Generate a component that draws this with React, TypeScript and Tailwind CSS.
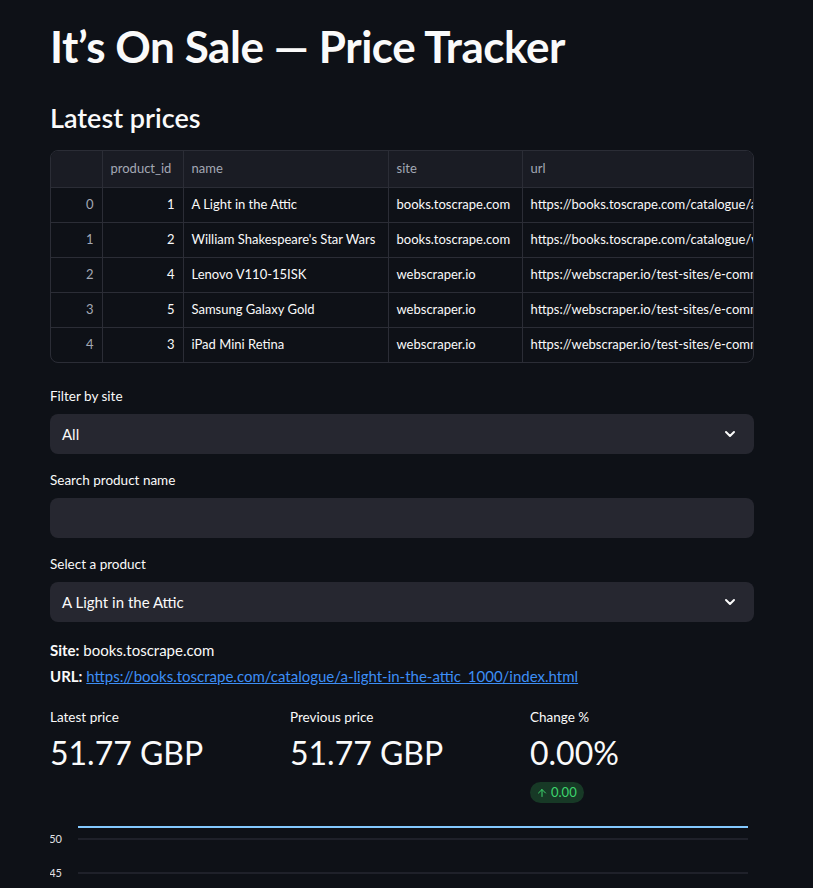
import { ChevronDown, ArrowUp } from 'lucide-react';

const rows = [
  { idx: 0, id: 1, name: 'A Light in the Attic', site: 'books.toscrape.com', url: 'https://books.toscrape.com/catalogue/a-light-in-the-attic_1000/index.html' },
  { idx: 1, id: 2, name: "William Shakespeare's Star Wars", site: 'books.toscrape.com', url: 'https://books.toscrape.com/catalogue/william-shakespeares-star-wars_1/index.html' },
  { idx: 2, id: 4, name: 'Lenovo V110-15ISK', site: 'webscraper.io', url: 'https://webscraper.io/test-sites/e-commerce/allinone/product/545' },
  { idx: 3, id: 5, name: 'Samsung Galaxy Gold', site: 'webscraper.io', url: 'https://webscraper.io/test-sites/e-commerce/allinone/product/549' },
  { idx: 4, id: 3, name: 'iPad Mini Retina', site: 'webscraper.io', url: 'https://webscraper.io/test-sites/e-commerce/allinone/product/611' },
];

const font = "font-['Source_Sans_Pro','Lato',sans-serif]";

function Label({ children }: { children: React.ReactNode }) {
  return <div className="text-[13.5px] leading-[21px] pb-[7px] text-[#fafafa]">{children}</div>;
}

function SelectBox({ value }: { value?: string }) {
  return (
    <div className="h-10 rounded-lg bg-[#262730] flex items-center justify-between pl-3 pr-4">
      <span className="text-[15px] text-[#fafafa]">{value}</span>
      {value !== undefined && <ChevronDown size={16} strokeWidth={3} className="text-[#fafafa]" />}
    </div>
  );
}

function Metric({ label, value, delta }: { label: string; value: string; delta?: string }) {
  return (
    <div className="flex flex-col">
      <div className="text-[13.5px] leading-[21px] text-[#fafafa]">{label}</div>
      <div className="text-[32px] leading-[48px] text-[#fafafa] mt-[1px]">{value}</div>
      {delta && (
        <div className="mt-[5px] self-start h-[21px] rounded-full bg-[#173926] text-[#3dd56d] text-[13px] flex items-center gap-[3px] pl-[6px] pr-[7px]">
          <ArrowUp size={12} strokeWidth={2} />
          <span>{delta}</span>
        </div>
      )}
    </div>
  );
}

export default function App() {
  return (
    <div className={`h-[888px] overflow-hidden bg-[#0e1117] text-[#fafafa] ${font}`}>
      <div className="w-[704px] ml-[50px] pt-[20px]">
        <h1 className="text-[44px] leading-[52px] font-bold tracking-[-0.01em]">It’s On Sale — Price Tracker</h1>
        <h2 className="text-[27px] leading-[36px] font-semibold mt-[28px]">Latest prices</h2>

        <div className="mt-[14px] rounded-lg border border-[#2b2d36] overflow-hidden">
          <table className="border-collapse table-fixed text-[13px]" style={{ width: 900 }}>
            <colgroup>
              <col className="w-[51px]" />
              <col className="w-[81px]" />
              <col className="w-[205px]" />
              <col className="w-[134px]" />
              <col className="w-[429px]" />
            </colgroup>
            <thead>
              <tr className="h-[36px] bg-[#1a1c24] text-[#a3a8b4]">
                <th className="border-r border-b border-[#2b2d36]"></th>
                <th className="border-r border-b border-[#2b2d36] font-normal text-left px-2">product_id</th>
                <th className="border-r border-b border-[#2b2d36] font-normal text-left px-2">name</th>
                <th className="border-r border-b border-[#2b2d36] font-normal text-left px-2">site</th>
                <th className="border-b border-[#2b2d36] font-normal text-left px-2">url</th>
              </tr>
            </thead>
            <tbody>
              {rows.map((r, i) => (
                <tr key={r.idx} className="h-[35px]">
                  <td className={`border-r border-[#2b2d36] text-right px-2 text-[#a3a8b4] ${i < 4 ? 'border-b' : ''}`}>{r.idx}</td>
                  <td className={`border-r border-[#2b2d36] text-right px-2 ${i < 4 ? 'border-b' : ''}`}>{r.id}</td>
                  <td className={`border-r border-[#2b2d36] px-2 whitespace-nowrap overflow-hidden ${i < 4 ? 'border-b' : ''}`}>{r.name}</td>
                  <td className={`border-r border-[#2b2d36] px-2 whitespace-nowrap overflow-hidden ${i < 4 ? 'border-b' : ''}`}>{r.site}</td>
                  <td className={`border-[#2b2d36] px-2 whitespace-nowrap overflow-hidden ${i < 4 ? 'border-b' : ''}`}>{r.url}</td>
                </tr>
              ))}
            </tbody>
          </table>
        </div>

        <div className="mt-[23px] flex flex-col gap-4">
          <div>
            <Label>Filter by site</Label>
            <SelectBox value="All" />
          </div>
          <div>
            <Label>Search product name</Label>
            <div className="h-10 rounded-lg bg-[#262730]" />
          </div>
          <div>
            <Label>Select a product</Label>
            <SelectBox value="A Light in the Attic" />
          </div>
        </div>

        <div className="mt-4 text-[15px] leading-6">
          <p><span className="font-bold">Site:</span> books.toscrape.com</p>
          <p className="mt-[2px]">
            <span className="font-bold">URL:</span>{' '}
            <a className="text-[#3d8ef5] underline" href="#">https://books.toscrape.com/catalogue/a-light-in-the-attic_1000/index.html</a>
          </p>
        </div>

        <div className="mt-[19px] grid grid-cols-3 gap-4">
          <Metric label="Latest price" value="51.77 GBP" />
          <Metric label="Previous price" value="51.77 GBP" />
          <Metric label="Change %" value="0.00%" delta="0.00" />
        </div>

        <svg className="mt-[9px] block" width="704" height="300" viewBox="0 0 704 300">
          <line x1="28" y1="27" x2="698" y2="27" stroke="#31333f" strokeWidth="1" />
          <line x1="28" y1="61" x2="698" y2="61" stroke="#31333f" strokeWidth="1" />
          <line x1="28" y1="95" x2="698" y2="95" stroke="#31333f" strokeWidth="1" />
          <text x="12" y="31" fontSize="11" fill="#e0e0e6" textAnchor="end" fontFamily="Lato, sans-serif">50</text>
          <text x="12" y="65" fontSize="11" fill="#e0e0e6" textAnchor="end" fontFamily="Lato, sans-serif">45</text>
          <line x1="28" y1="15" x2="698" y2="15" stroke="#83c9ff" strokeWidth="2" />
        </svg>
      </div>
    </div>
  );
}
